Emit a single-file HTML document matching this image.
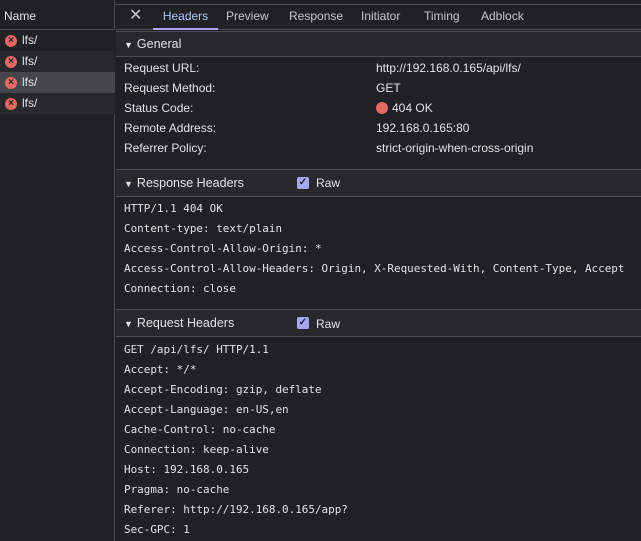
<!DOCTYPE html>
<html><head><meta charset="utf-8"><style>
*{margin:0;padding:0;box-sizing:border-box}
body{width:641px;height:541px;overflow:hidden;background:#202124;color:#e3e3e3;font-family:"Liberation Sans",sans-serif;font-size:12px;position:relative}
.abs{position:absolute}
.left{left:0;top:0;width:115px;height:541px;background:#202124;border-right:1px solid #494c50}
.row{position:absolute;left:0;width:115px;height:21px;line-height:21px;padding-left:22px;color:#e3e3e3}
.ic{position:absolute;left:5px;top:5px;width:12px;height:12px;border-radius:50%;background:#e46962;color:#202124;font-size:10px;line-height:12px;text-align:center;font-weight:bold}
.tabs{left:116px;top:5px;width:525px;height:25px;border-bottom:1px solid #494c50;background:#202124}
.tab{position:absolute;top:0;height:25px;line-height:22px;color:#c4c7c5}
.sec{position:absolute;left:116px;width:525px;background:#28292c;border-top:1px solid #494c50;border-bottom:1px solid #494c50;padding-left:8px;color:#e3e3e3;font-size:12.5px}
.sec .tri{font-size:9px;margin-right:4px}
.kv{position:absolute;left:124px;height:20px;line-height:20px}
.v{position:absolute;left:376px;height:20px;line-height:20px}
.m{position:absolute;left:124px;height:20px;line-height:20px;font-family:"DejaVu Sans Mono","Liberation Mono",monospace;font-size:10.95px;color:#e3e3e3;white-space:pre}
.cb{position:absolute;left:297px;width:12px;height:12px;background:#a8a6f5;border-radius:2px;color:#202124;font-size:10px;line-height:12px;text-align:center;font-weight:bold}
.raw{position:absolute;left:316px}
</style></head><body>
<div class="abs" style="left:0;top:0;width:641px;height:5px;background:#202124;border-bottom:1px solid #494c50"></div>
<div class="abs" style="left:20px;top:0;width:8px;height:3px;background:#3c5a8a"></div>
<div class="abs" style="left:40px;top:0;width:8px;height:3px;background:#3c5a8a"></div>
<div class="abs" style="left:60px;top:0;width:8px;height:3px;background:#3c5a8a"></div>
<div class="abs left"></div>
<div class="abs" style="left:0;top:5px;width:115px;height:25px;line-height:22px;padding-left:4px;border-bottom:1px solid #494c50">Name</div>
<div class="row" style="top:30px;background:#202124"><span class="ic">×</span>lfs/</div>
<div class="row" style="top:51px;background:#28292c"><span class="ic">×</span>lfs/</div>
<div class="row" style="top:72px;background:#45474b"><span class="ic">×</span>lfs/</div>
<div class="row" style="top:93px;background:#28292c"><span class="ic">×</span>lfs/</div>

<div class="abs tabs">
<div class="tab" style="left:13px;font-size:16px;line-height:21px;color:#c4c7c5">✕</div>
<div class="tab" style="left:37px;width:65px;text-align:center;color:#a8c7fa;border-bottom:2px solid #a8a6f5">Headers</div>
<div class="tab" style="left:110px">Preview</div>
<div class="tab" style="left:173px">Response</div>
<div class="tab" style="left:245px">Initiator</div>
<div class="tab" style="left:308px">Timing</div>
<div class="tab" style="left:365px">Adblock</div>
</div>

<div class="sec" style="top:31px;height:26px;line-height:24px"><span class="tri">▼</span>General</div>
<div class="kv" style="top:58px">Request URL:</div><div class="v" style="top:58px">http://192.168.0.165/api/lfs/</div>
<div class="kv" style="top:78px">Request Method:</div><div class="v" style="top:78px">GET</div>
<div class="kv" style="top:98px">Status Code:</div><div class="v" style="top:98px"><span style="display:inline-block;width:12px;height:12px;border-radius:50%;background:#e46962;vertical-align:-2px;margin-right:4px"></span>404 OK</div>
<div class="kv" style="top:118px">Remote Address:</div><div class="v" style="top:118px">192.168.0.165:80</div>
<div class="kv" style="top:138px">Referrer Policy:</div><div class="v" style="top:138px">strict-origin-when-cross-origin</div>

<div class="sec" style="top:169px;height:28px;line-height:26px"><span class="tri">▼</span>Response Headers</div>
<div class="cb" style="top:177px">✓</div><div class="raw" style="top:176px">Raw</div>
<div class="m" style="top:199px">HTTP/1.1 404 OK</div>
<div class="m" style="top:219px">Content-type: text/plain</div>
<div class="m" style="top:239px">Access-Control-Allow-Origin: *</div>
<div class="m" style="top:259px">Access-Control-Allow-Headers: Origin, X-Requested-With, Content-Type, Accept</div>
<div class="m" style="top:279px">Connection: close</div>

<div class="sec" style="top:309px;height:28px;line-height:26px"><span class="tri">▼</span>Request Headers</div>
<div class="cb" style="top:317px">✓</div><div class="raw" style="top:317px">Raw</div>
<div class="m" style="top:340px">GET /api/lfs/ HTTP/1.1</div>
<div class="m" style="top:360px">Accept: */*</div>
<div class="m" style="top:380px">Accept-Encoding: gzip, deflate</div>
<div class="m" style="top:400px">Accept-Language: en-US,en</div>
<div class="m" style="top:420px">Cache-Control: no-cache</div>
<div class="m" style="top:440px">Connection: keep-alive</div>
<div class="m" style="top:460px">Host: 192.168.0.165</div>
<div class="m" style="top:480px">Pragma: no-cache</div>
<div class="m" style="top:500px">Referer: http://192.168.0.165/app?</div>
<div class="m" style="top:520px">Sec-GPC: 1</div>
</body></html>
